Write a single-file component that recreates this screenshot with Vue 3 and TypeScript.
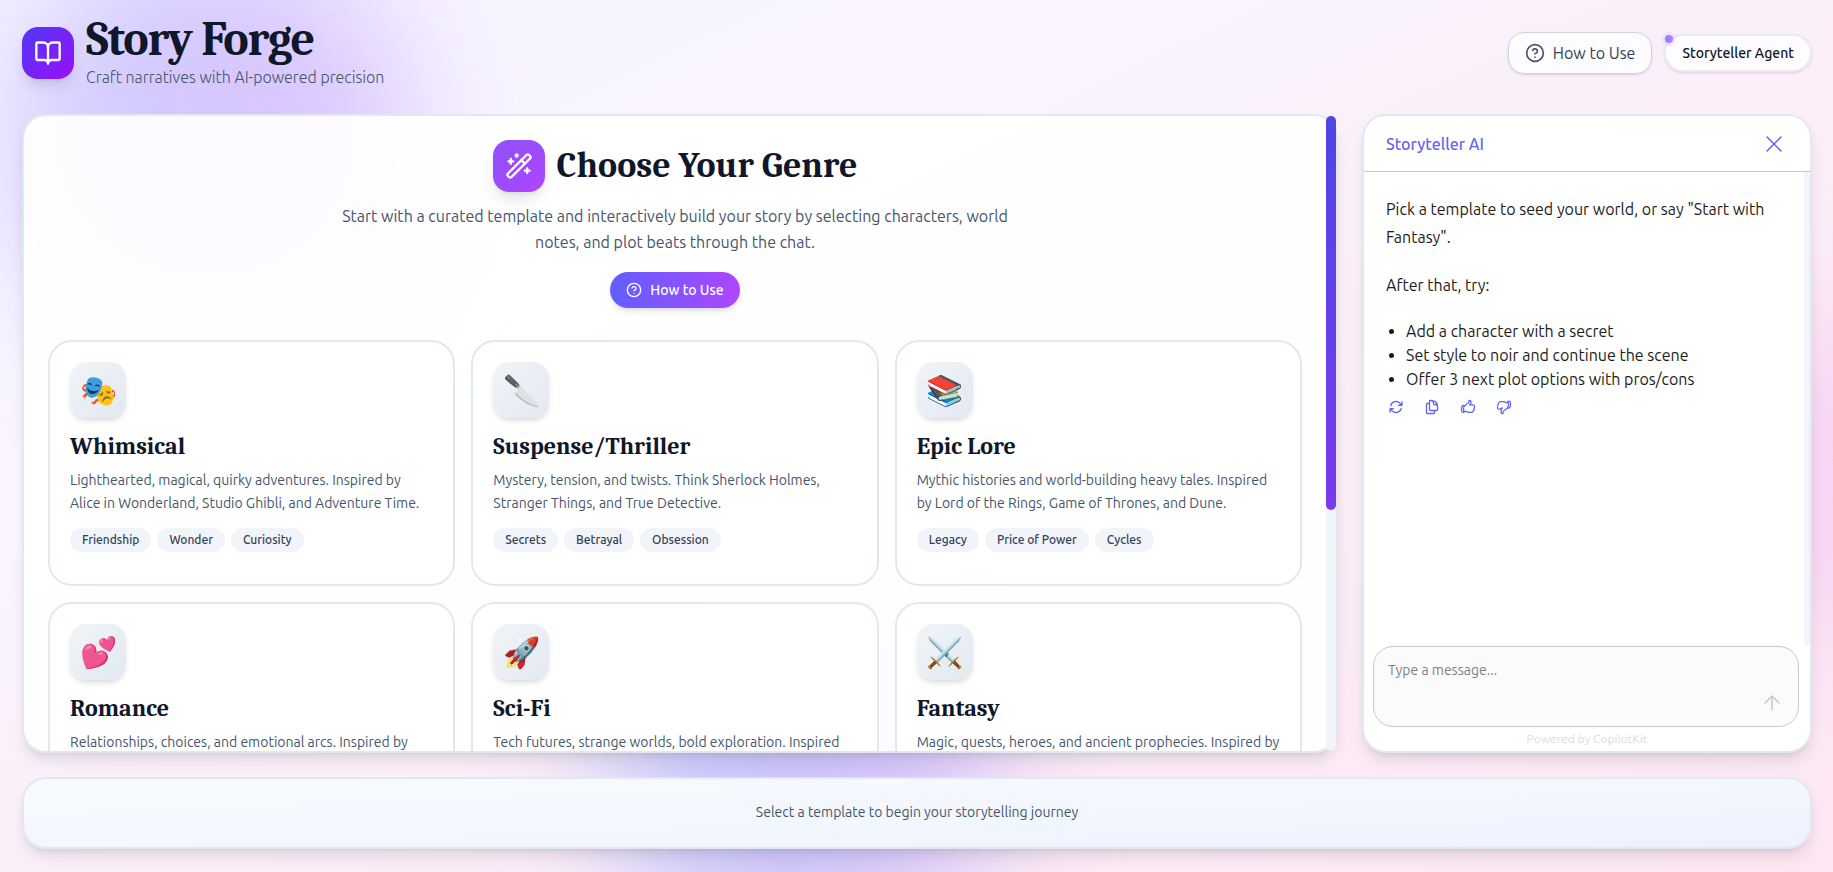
<script setup lang="ts">
import { ref } from 'vue'

interface Genre {
  name: string
  emoji: string
  description: string
  themes?: string[]
}

const genres: Genre[] = [
  { name: 'Whimsical', emoji: '🎭', description: 'Lighthearted, magical, quirky adventures. Inspired by Alice in Wonderland, Studio Ghibli, and Adventure Time.', themes: ['Friendship', 'Wonder', 'Curiosity'] },
  { name: 'Suspense/Thriller', emoji: '🔪', description: 'Mystery, tension, and twists. Think Sherlock Holmes, Stranger Things, and True Detective.', themes: ['Secrets', 'Betrayal', 'Obsession'] },
  { name: 'Epic Lore', emoji: '📚', description: 'Mythic histories and world-building heavy tales. Inspired by Lord of the Rings, Game of Thrones, and Dune.', themes: ['Legacy', 'Price of Power', 'Cycles'] },
  { name: 'Romance', emoji: '💕', description: 'Relationships, choices, and emotional arcs. Inspired by' },
  { name: 'Sci-Fi', emoji: '🚀', description: 'Tech futures, strange worlds, bold exploration. Inspired' },
  { name: 'Fantasy', emoji: '⚔️', description: 'Magic, quests, heroes, and ancient prophecies. Inspired by' },
]

const suggestions: string[] = [
  'Add a character with a secret',
  'Set style to noir and continue the scene',
  'Offer 3 next plot options with pros/cons',
]

const replyActions: { label: string; path: string }[] = [
  { label: 'Regenerate response', path: 'M16.023 9.348h4.992v-.001M2.985 19.644v-4.992m0 0h4.992m-4.993 0 3.181 3.183a8.25 8.25 0 0 0 13.803-3.7M4.031 9.865a8.25 8.25 0 0 1 13.803-3.7l3.181 3.182m0-4.991v4.99' },
  { label: 'Copy to clipboard', path: 'M15.75 17.25v3.375c0 .621-.504 1.125-1.125 1.125h-9.75a1.125 1.125 0 0 1-1.125-1.125V7.875c0-.621.504-1.125 1.125-1.125H6.75a9.06 9.06 0 0 1 1.5.124m7.5 10.376h3.375c.621 0 1.125-.504 1.125-1.125V11.25c0-4.46-3.243-8.161-7.5-8.876a9.06 9.06 0 0 0-1.5-.124H9.375c-.621 0-1.125.504-1.125 1.125v3.5m7.5 10.375H9.375a1.125 1.125 0 0 1-1.125-1.125v-9.25m12 6.625v-1.875a3.375 3.375 0 0 0-3.375-3.375h-1.5a1.125 1.125 0 0 1-1.125-1.125v-1.5a3.375 3.375 0 0 0-3.375-3.375H9.75' },
  { label: 'Thumbs up', path: 'M6.633 10.25c.806 0 1.533-.446 2.031-1.08a9.041 9.041 0 0 1 2.861-2.4c.723-.384 1.35-.956 1.653-1.715a4.498 4.498 0 0 0 .322-1.672V2.75a.75.75 0 0 1 .75-.75 2.25 2.25 0 0 1 2.25 2.25c0 1.152-.26 2.243-.723 3.218-.266.558.107 1.282.725 1.282m0 0h3.126c1.026 0 1.945.694 2.054 1.715.045.422.068.85.068 1.285a11.95 11.95 0 0 1-2.649 7.521c-.388.482-.987.729-1.605.729H13.48c-.483 0-.964-.078-1.423-.23l-3.114-1.04a4.501 4.501 0 0 0-1.423-.23H5.904m10.598-9.75H14.25M5.904 18.5c.083.205.173.405.27.602.197.4-.078.898-.523.898h-.908c-.889 0-1.713-.518-1.972-1.368a12 12 0 0 1-.521-3.507c0-1.553.295-3.036.831-4.398C3.387 9.953 4.167 9.5 5 9.5h1.053c.472 0 .745.556.5.96a8.958 8.958 0 0 0-1.302 4.665c0 1.194.232 2.333.654 3.375Z' },
  { label: 'Thumbs down', path: 'M7.498 15.25H4.372c-1.026 0-1.945-.694-2.054-1.715a12.137 12.137 0 0 1-.068-1.285c0-2.848.992-5.464 2.649-7.521C5.287 4.247 5.886 4 6.504 4h4.016a4.5 4.5 0 0 1 1.423.23l3.114 1.04a4.5 4.5 0 0 0 1.423.23h1.294M7.498 15.25c.618 0 .991.724.725 1.282A7.471 7.471 0 0 0 7.5 19.75 2.25 2.25 0 0 0 9.75 22a.75.75 0 0 0 .75-.75v-.633c0-.573.11-1.14.322-1.672.304-.76.93-1.33 1.653-1.715a9.04 9.04 0 0 0 2.86-2.4c.498-.634 1.226-1.08 2.032-1.08h.384m-10.253 0H9.7m8.075-9.75c.01.05.027.1.05.148.593 1.2.925 2.55.925 3.977 0 1.487-.36 2.89-.999 4.125m.023-8.25c-.076-.365.183-.75.575-.75h.908c.889 0 1.713.518 1.972 1.368.339 1.11.521 2.287.521 3.507 0 1.553-.295 3.036-.831 4.398-.306.774-1.086 1.227-1.918 1.227h-1.053c-.472 0-.745-.556-.5-.96a8.95 8.95 0 0 0 .303-.54' },
]

const message = ref('')
</script>

<template>
  <div class="page">
    <div class="backdrop" aria-hidden="true">
      <span class="glow glow-violet"></span>
      <span class="glow glow-pink"></span>
      <span class="glow glow-indigo"></span>
    </div>

    <header class="topbar">
      <div class="brand">
        <span class="logo">
          <svg class="icon-lg" viewBox="0 0 24 24" aria-hidden="true">
            <path d="M12 7v14" />
            <path d="M3 18a1 1 0 0 1-1-1V4a1 1 0 0 1 1-1h5a4 4 0 0 1 4 4 4 4 0 0 1 4-4h5a1 1 0 0 1 1 1v13a1 1 0 0 1-1 1h-6a3 3 0 0 0-3 3 3 3 0 0 0-3-3z" />
          </svg>
        </span>
        <div>
          <h1 class="brand-name">Story Forge</h1>
          <p class="tagline">Craft narratives with AI-powered precision</p>
        </div>
      </div>
      <div class="top-actions">
        <button type="button" class="help-button">
          <svg class="icon-md" viewBox="0 0 24 24" aria-hidden="true">
            <circle cx="12" cy="12" r="10" />
            <path d="M9.09 9a3 3 0 0 1 5.83 1c0 2-3 3-3 3" />
            <path d="M12 17h.01" />
          </svg>
          How to Use
        </button>
        <div class="agent-badge">
          <span class="agent-dot"></span>
          Storyteller Agent
        </div>
      </div>
    </header>

    <main class="workspace">
      <section class="genres">
        <div class="genres-body">
          <div class="intro">
            <div class="intro-title">
              <span class="intro-icon">
                <svg class="icon-lg" viewBox="0 0 24 24" aria-hidden="true">
                  <path d="m21.64 3.64-1.28-1.28a1.21 1.21 0 0 0-1.72 0L2.36 18.64a1.21 1.21 0 0 0 0 1.72l1.28 1.28a1.2 1.2 0 0 0 1.72 0L21.64 5.36a1.2 1.2 0 0 0 0-1.72" />
                  <path d="m14 7 3 3M5 6v4M19 14v4M10 2v2M7 8H3M21 16h-4M11 3H9" />
                </svg>
              </span>
              <h2>Choose Your Genre</h2>
            </div>
            <p class="intro-text">Start with a curated template and interactively build your story by selecting characters, world notes, and plot beats through the chat.</p>
            <button type="button" class="guide-button">
              <svg class="icon-sm" viewBox="0 0 24 24" aria-hidden="true">
                <circle cx="12" cy="12" r="10" />
                <path d="M9.09 9a3 3 0 0 1 5.83 1c0 2-3 3-3 3" />
                <path d="M12 17h.01" />
              </svg>
              How to Use
            </button>
          </div>

          <div class="cards">
            <button v-for="genre in genres" :key="genre.name" type="button" class="card">
              <span class="card-icon">{{ genre.emoji }}</span>
              <span class="card-title">{{ genre.name }}</span>
              <span class="card-text">{{ genre.description }}</span>
              <span v-if="genre.themes" class="tags">
                <span v-for="theme in genre.themes" :key="theme" class="tag">{{ theme }}</span>
              </span>
            </button>
          </div>
        </div>
        <div class="rail rail-wide" aria-hidden="true"><span class="thumb"></span></div>
      </section>

      <aside class="chat">
        <div class="chat-header">
          <h2>Storyteller AI</h2>
          <button type="button" class="icon-button" aria-label="Close chat">
            <svg class="icon-24" viewBox="0 0 24 24" aria-hidden="true"><path d="M5 19 19 5M5 5l14 14" /></svg>
          </button>
        </div>
        <div class="conversation">
          <div class="messages">
            <p>Pick a template to seed your world, or say "Start with Fantasy".</p>
            <p>After that, try:</p>
            <ul>
              <li v-for="item in suggestions" :key="item">{{ item }}</li>
            </ul>
            <div class="reply-actions">
              <button v-for="action in replyActions" :key="action.label" type="button" class="icon-button" :aria-label="action.label">
                <svg class="icon-sm" viewBox="0 0 24 24" aria-hidden="true"><path :d="action.path" /></svg>
              </button>
            </div>
          </div>
          <div class="rail rail-narrow" aria-hidden="true"></div>
        </div>
        <form class="composer" @submit.prevent>
          <textarea v-model="message" aria-label="Message" placeholder="Type a message..." rows="1"></textarea>
          <button type="submit" class="icon-button send" aria-label="Send message">
            <svg class="icon-24" viewBox="0 0 24 24" aria-hidden="true"><path d="M12 19V5m0 0-7 7m7-7 7 7" /></svg>
          </button>
        </form>
        <p class="powered">Powered by CopilotKit</p>
      </aside>
    </main>

    <footer class="status">Select a template to begin your storytelling journey</footer>
  </div>
</template>

<style>
body {
  margin: 0;
}
</style>

<style scoped>
* {
  box-sizing: border-box;
}

h1,
h2,
p,
ul {
  margin: 0;
}

button,
textarea {
  font: inherit;
  color: inherit;
}

button {
  cursor: pointer;
}

svg {
  display: block;
  flex: none;
  fill: none;
  stroke: currentColor;
  stroke-width: 2;
  stroke-linecap: round;
  stroke-linejoin: round;
}

.icon-lg {
  width: 28px;
  height: 28px;
}

.icon-24 {
  width: 24px;
  height: 24px;
  stroke-width: 1.5;
}

.icon-md {
  width: 20px;
  height: 20px;
}

.icon-sm {
  width: 16px;
  height: 16px;
}

.page {
  position: relative;
  isolation: isolate;
  display: flex;
  flex-direction: column;
  gap: 24px;
  height: 100vh;
  padding: 16px 21px 23px 22px;
  overflow: hidden;
  background: linear-gradient(to bottom right, #f5f3ff 0%, #faf5ff 30%, #fbeff9 50%, #fce7f3 100%);
  color: #0f172a;
  font-family: Ubuntu, "Noto Sans", sans-serif;
  font-size: 16px;
  line-height: 24px;
}

.backdrop {
  position: absolute;
  inset: 0;
  z-index: -1;
}

.glow {
  position: absolute;
  border-radius: 50%;
  filter: blur(64px);
}

.glow-violet {
  top: -60px;
  left: 10px;
  width: 400px;
  height: 400px;
  background: linear-gradient(90deg, rgba(175, 170, 255, 0.55), rgba(205, 170, 255, 0.65));
}

.glow-pink {
  top: 320px;
  right: -140px;
  width: 320px;
  height: 320px;
  background: rgba(240, 180, 240, 0.4);
}

.glow-indigo {
  bottom: -90px;
  left: 610px;
  width: 384px;
  height: 384px;
  background: linear-gradient(90deg, rgba(165, 180, 252, 0.65), rgba(196, 170, 250, 0.65));
}

/* Header */
.topbar {
  display: flex;
  align-items: center;
  justify-content: space-between;
}

.brand {
  display: flex;
  align-items: center;
  gap: 12px;
}

.logo,
.intro-icon {
  display: flex;
  align-items: center;
  justify-content: center;
  width: 52px;
  height: 52px;
  border-radius: 16px;
  color: #fff;
}

.logo {
  background: linear-gradient(135deg, #4f39f6, #9810fa);
  box-shadow: 0 10px 15px -3px rgba(0, 0, 0, 0.1), 0 4px 6px -4px rgba(0, 0, 0, 0.1);
}

.brand-name {
  font-family: Cambria, Caladea, "Noto Serif", serif;
  font-size: 48px;
  font-weight: 700;
  line-height: 48px;
  letter-spacing: -0.025em;
}

.tagline {
  color: #45556c;
  font-weight: 300;
  line-height: 26px;
}

.top-actions {
  display: flex;
  align-items: center;
  gap: 12px;
}

.help-button {
  display: flex;
  align-items: center;
  gap: 8px;
  padding: 8px 16px;
  border: 1px solid #cad5e2;
  border-radius: 16px;
  background: rgba(255, 255, 255, 0.8);
  color: #314158;
  box-shadow: 0 1px 3px rgba(0, 0, 0, 0.1), 0 1px 2px -1px rgba(0, 0, 0, 0.1);
}

.help-button svg {
  color: #45556c;
}

.agent-badge {
  position: relative;
  padding: 7px 16px;
  border: 2px solid rgba(226, 232, 240, 0.7);
  border-radius: 19px;
  background: rgba(255, 255, 255, 0.8);
  background-clip: padding-box;
  font-size: 14px;
  font-weight: 500;
  line-height: 20px;
  box-shadow: 0 1px 3px rgba(0, 0, 0, 0.1), 0 1px 2px -1px rgba(0, 0, 0, 0.1);
}

.agent-dot {
  position: absolute;
  top: -1px;
  left: -1px;
  width: 8px;
  height: 8px;
  border-radius: 50%;
  background: linear-gradient(90deg, #8b80ff, #c27aff);
  box-shadow: 0 0 0 3px rgba(194, 160, 255, 0.2);
}

/* Workspace */
.workspace {
  display: grid;
  grid-template-columns: minmax(0, 1fr) 450px;
  gap: 24px;
  flex: 1;
  min-height: 0;
}

.genres,
.chat {
  border: 2px solid #e2e8f0;
  border-radius: 24px;
  box-shadow: 0 10px 15px -3px rgba(0, 0, 0, 0.1), 0 4px 6px -4px rgba(0, 0, 0, 0.1);
}

.genres {
  display: flex;
  min-height: 0;
  background: rgba(255, 255, 255, 0.92);
}

.genres-body {
  display: flex;
  flex: 1;
  flex-direction: column;
  gap: 32px;
  min-width: 0;
  padding: 24px;
  overflow-y: auto;
  border-radius: 22px 0 0 22px;
}

.rail {
  flex: none;
  background: #f1f5f9;
}

.rail-wide {
  width: 10px;
  border-radius: 5px;
}

.rail-narrow {
  width: 6px;
  border-radius: 3px;
}

.thumb {
  display: block;
  height: 62%;
  border-radius: 5px;
  background: linear-gradient(180deg, #4f46e5, #7c3aed);
}

.intro {
  display: flex;
  flex-direction: column;
  align-items: center;
}

.intro-title {
  display: flex;
  align-items: center;
  gap: 12px;
}

.intro-title h2 {
  font-family: Cambria, Caladea, "Noto Serif", serif;
  font-size: 36px;
  font-weight: 700;
  line-height: 40px;
}

.intro-icon {
  background: linear-gradient(135deg, #8e51ff, #ad46ff);
  box-shadow: 0 10px 15px -3px rgba(0, 0, 0, 0.1), 0 4px 6px -4px rgba(0, 0, 0, 0.1);
}

.intro-text {
  max-width: 672px;
  margin-top: 11px;
  color: #45556c;
  line-height: 26px;
  text-align: center;
}

.guide-button {
  display: flex;
  align-items: center;
  gap: 8px;
  margin-top: 17px;
  padding: 8px 16px;
  border: 0;
  border-radius: 18px;
  background: linear-gradient(90deg, #615fff, #ad46ff);
  color: #fff;
  font-size: 14px;
  font-weight: 500;
  line-height: 20px;
  box-shadow: 0 4px 6px -1px rgba(0, 0, 0, 0.1), 0 2px 4px -2px rgba(0, 0, 0, 0.1);
}

.cards {
  display: grid;
  grid-template-columns: repeat(3, minmax(0, 1fr));
  grid-auto-rows: minmax(246px, auto);
  gap: 16px;
}

.card {
  display: flex;
  flex-direction: column;
  align-items: flex-start;
  padding: 20px 20px 32px;
  border: 2px solid #e2e8f0;
  border-radius: 24px;
  background: #fff;
  text-align: left;
}

.card-icon {
  display: flex;
  align-items: center;
  justify-content: center;
  width: 56px;
  height: 56px;
  border-radius: 16px;
  background: linear-gradient(135deg, #f1f5f9, #e2e8f0);
  font-size: 30px;
  line-height: 36px;
  box-shadow: 0 4px 6px -1px rgba(0, 0, 0, 0.1), 0 2px 4px -2px rgba(0, 0, 0, 0.1);
}

.card-title {
  margin-top: 12px;
  color: #0f172a;
  font-family: Cambria, Caladea, "Noto Serif", serif;
  font-size: 24px;
  font-weight: 700;
  line-height: 32px;
}

.card-text {
  margin-top: 7px;
  color: #45556c;
  font-size: 14px;
  line-height: 23px;
}

.tags {
  display: flex;
  flex-wrap: wrap;
  gap: 6px;
  margin-top: 13px;
}

.tag {
  padding: 4px 12px;
  border-radius: 12px;
  background: #f1f5f9;
  color: #314158;
  font-size: 12px;
  font-weight: 500;
  line-height: 16px;
}

/* Chat */
.chat {
  display: flex;
  flex-direction: column;
  min-height: 0;
  overflow: hidden;
  background: #fff;
}

.chat-header {
  display: flex;
  flex: none;
  align-items: center;
  justify-content: space-between;
  height: 56px;
  padding: 0 24px 0 22px;
  border-bottom: 1px solid #c8c8c8;
  color: #6366f1;
}

.chat-header h2 {
  font-size: 16px;
  font-weight: 500;
  line-height: 24px;
}

.icon-button {
  display: flex;
  padding: 0;
  border: 0;
  background: none;
  color: #6366f1;
}

.conversation {
  display: flex;
  flex: 1;
  min-height: 0;
}

.messages {
  flex: 1;
  min-width: 0;
  padding: 23px 24px 23px 22px;
  overflow-y: auto;
  color: #1c1c1c;
}

.messages p {
  margin-bottom: 20px;
  line-height: 28px;
}

.messages ul {
  padding-left: 20px;
}

.reply-actions {
  display: flex;
  gap: 20px;
  padding: 8px 2px;
}

.composer {
  display: flex;
  flex: none;
  align-items: flex-end;
  margin: 0 11px 0 9px;
  padding: 11px 14px;
  border: 1px solid #c8c8c8;
  border-radius: 20px;
  background: #fbfbfb;
}

.composer textarea {
  flex: 1;
  min-width: 0;
  height: 57px;
  padding: 0;
  border: 0;
  outline: 0;
  resize: none;
  background: transparent;
  font-size: 14px;
  line-height: 24px;
}

.composer textarea::placeholder {
  color: #808080;
}

.send {
  color: #c8c8c8;
}

.powered {
  padding: 4px 0;
  color: #dcdcdc;
  font-size: 12px;
  line-height: 16px;
  text-align: center;
}

/* Status bar */
.status {
  padding: 24px 24px 26px;
  border: 2px solid #e2e8f0;
  border-radius: 24px;
  background: linear-gradient(to bottom right, #f8fafc, #f3f7fe 50%, #eef2ff);
  color: #45556c;
  font-size: 14px;
  line-height: 18px;
  text-align: center;
  box-shadow: 0 10px 15px -3px rgba(0, 0, 0, 0.1), 0 4px 6px -4px rgba(0, 0, 0, 0.1);
}
</style>
